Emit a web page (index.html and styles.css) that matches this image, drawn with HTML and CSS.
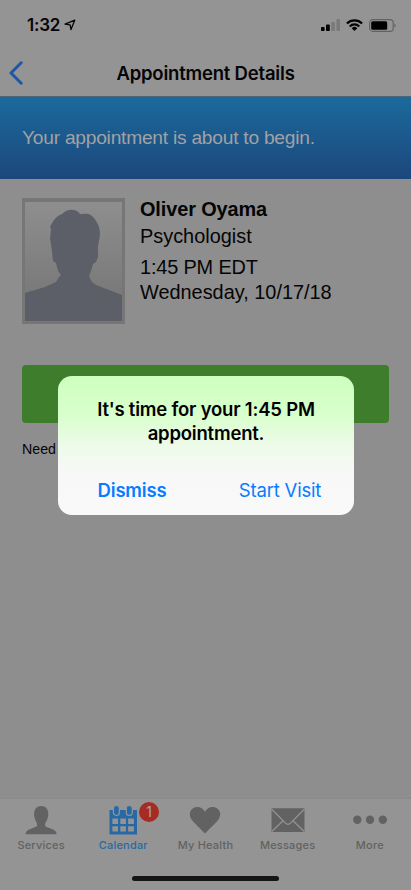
FILE: index.html
```html
<!DOCTYPE html>
<html lang="en">
<head>
<meta charset="utf-8">
<meta name="viewport" content="width=device-width, initial-scale=1">
<title>Appointment Details</title>
<link rel="stylesheet" href="styles.css">
</head>
<body>
<div class="screen">
  <header class="header">
    <div class="status">
      <div class="status-left">
        <span class="clock">1:32</span>
        <svg class="location" width="12" height="12" viewBox="0 0 12 12"><path d="M1 5.2 10.8 1.1 7 10.6 6.1 5.9Z" fill="none" stroke="#050505" stroke-width="1.3" stroke-linejoin="round"/></svg>
      </div>
      <div class="status-right">
        <svg width="19" height="12" viewBox="0 0 19 12"><rect x="0" y="8" width="3.6" height="4" rx=".8"/><rect x="5" y="5.6" width="3.8" height="6.4" rx=".8"/><rect x="10.3" y="3" width="3.6" height="9" rx=".8" fill="#7a7a7a"/><rect x="15.4" y="0" width="3.6" height="12" rx=".8" fill="#7a7a7a"/></svg>
        <svg width="17" height="12" viewBox="0 0 17 12"><g fill="none" stroke="#000" stroke-width="2.1"><path d="M.9 4.5a10.7 10.7 0 0 1 15.2 0"/><path d="M3.7 7.4a6.8 6.8 0 0 1 9.6 0"/></g><path d="M5.7 9.2a4 4 0 0 1 5.6 0L8.5 12Z"/></svg>
        <svg width="27" height="13" viewBox="0 0 27 13"><rect x=".6" y=".6" width="23.6" height="11.8" rx="3.2" fill="none" stroke="#626262" stroke-width="1.1"/><rect x="2.2" y="2.2" width="16" height="8.6" rx="1.6"/><path d="M25.4 4.4c1.6.6 1.6 3.6 0 4.2Z" fill="#626262"/></svg>
      </div>
    </div>
    <div class="nav">
      <svg class="back" width="14" height="24" viewBox="0 0 14 24"><path d="M12.2 1.8 2 12 12.2 22.2" fill="none" stroke="#1d57a6" stroke-width="3" stroke-linecap="round" stroke-linejoin="round"/></svg>
      <h1 class="title">Appointment Details</h1>
    </div>
  </header>
  <div class="banner"><span class="banner-text">Your appointment is about to begin.</span></div>
  <main class="content">
    <section class="provider">
      <div class="photo">
        <svg width="97" height="119" viewBox="0 0 97 119"><path fill="#5c5f67" d="M0 91 20 85 31 80 34 75 36 73 33 69 31 61 28 59 27 50 26 42 25 37 26 27 25 25C28 19 31 14 37 12 42 7 51 6 55 12L58 12C66 10 71 17 74 25 76 33 74 38 73 44L73 55 71 60 68 62 66 69 64 74 67 80 71 83 97 93V119H0Z"/></svg>
      </div>
      <div class="details">
        <div class="name">Oliver Oyama</div>
        <div class="role">Psychologist</div>
        <div class="time">1:45 PM EDT</div>
        <div class="date">Wednesday, 10/17/18</div>
      </div>
    </section>
    <div class="start"></div>
    <p class="help">Need</p>
  </main>
  <footer class="tabs">
    <div class="tab">
      <svg class="tab-icon" width="32" height="30" viewBox="0 0 32 30"><path d="M16.3 1C12 1 9.2 4 9.1 8.500c-.1 3.200.9 6.800 2.600 9.200.7 1 .7 3.300-.5 4L4 24.500C1.500 25.600.8 27 .6 29.300h31c-.2-2.300-1-3.700-3.500-4.800L21 21.700c-1.200-.7-1.200-3-.5-4 1.700-2.400 2.900-6 2.800-9.200C23.200 4 20.600 1 16.300 1Z"/></svg>
      <span class="tab-label">Services</span>
    </div>
    <div class="tab tab-active">
      <svg class="tab-icon" width="28" height="30" viewBox="0 0 28 30"><path fill-rule="evenodd" d="M.5 5H28V29.500H.5ZM3.400 13.500V19H9V13.500ZM11.300 13.500V19H16.900V13.500ZM19.100 13.500V19H24.900V13.500ZM3.400 21.300V26.600H9V21.300ZM11.300 21.300V26.600H16.900V21.300ZM19.100 21.300V26.600H24.900V21.300Z"/><g stroke="#949494" stroke-width="1.200"><rect x="4.400" y=".3" width="6" height="10.200" rx="3"/><rect x="17.300" y=".3" width="6" height="10.200" rx="3"/></g></svg>
      <span class="tab-label">Calendar</span>
      <span class="badge">1</span>
    </div>
    <div class="tab">
      <svg class="tab-icon" width="32" height="30" viewBox="0 0 32 30"><path d="M16 28.500C14 26.300 7 20 3.300 15.500-.2 11.200.2 6.500 3.200 3.900 7.300.4 13.500 1.700 16 6.700 18.500 1.700 24.700.4 28.800 3.900c3 2.600 3.400 7.300-.1 11.600C25 20 18 26.300 16 28.500Z"/></svg>
      <span class="tab-label">My Health</span>
    </div>
    <div class="tab">
      <svg class="tab-icon" width="34" height="30" viewBox="0 0 34 30"><path d="M.5 3.200h33V27H.5Z"/><path d="M.5 4 14.500 18.200Q17 20.700 19.500 18.200L33.500 4M.8 26.500 12 15.800M33.200 26.500 22 15.800" fill="none" stroke="#949494" stroke-width="1.200"/></svg>
      <span class="tab-label">Messages</span>
    </div>
    <div class="tab">
      <svg class="tab-icon" width="34" height="30" viewBox="0 0 34 30"><circle cx="4.300" cy="14.700" r="4.200"/><circle cx="17" cy="14.700" r="4.200"/><circle cx="29.800" cy="14.700" r="4.200"/></svg>
      <span class="tab-label">More</span>
    </div>
    <div class="home"></div>
  </footer>
  <div class="dialog" role="alertdialog">
    <p class="message">It's time for your 1:45 PM<br>appointment.</p>
    <div class="actions">
      <span class="action dismiss">Dismiss</span>
      <span class="action visit">Start Visit</span>
    </div>
  </div>
</div>
</body>
</html>
```
FILE: styles.css
```css
* { box-sizing: border-box; margin: 0; padding: 0; }
body { background: #8e8e8e; color: #050505; font-family: "Liberation Sans", Arial, sans-serif; }
svg { display: block; flex: none; }
.screen { position: relative; width: 411px; height: 890px; display: flex; flex-direction: column; overflow: hidden; }

.header { height: 96px; background: #949494; font-family: Inter, sans-serif; }
.status { height: 50px; display: flex; justify-content: space-between; padding: 0 15px 0 27px; }
.status-left { display: flex; padding-top: 15px; gap: 4px; }
.clock { font-size: 17px; line-height: 21px; font-weight: 600; letter-spacing: -.2px; }
.location { margin-top: 4px; }
.status-right { display: flex; align-items: flex-start; padding-top: 19px; gap: 6px; }
.nav { height: 46px; display: flex; align-items: center; padding-left: 9px; }
.title { flex: 1; margin-right: 23px; padding-bottom: 1px; text-align: center; font-size: 18.5px; line-height: 24px; font-weight: 600; letter-spacing: -.2px; white-space: nowrap; }

.banner { height: 83px; padding: 28px 22px 0; border-top: 1px solid #4a6878; background: linear-gradient(#1b6a9c, #1c477c); color: #a1a2a4; font-size: 19.2px; line-height: 26px; letter-spacing: -.24px; white-space: nowrap; }

.content { flex: 1; padding: 19px 22px 0; }
.provider { display: flex; gap: 15px; height: 126px; }
.photo { width: 103px; height: 126px; border: 3px solid #767676; border-top-width: 4px; background: linear-gradient(#8e8e8e, #767676 90%); }
.details { font-size: 19.9px; line-height: 26px; white-space: nowrap; }
.name { font-weight: 700; line-height: 24px; margin-top: -1px; letter-spacing: -.1px; }
.role { margin-top: 2px; }
.time { margin-top: 6px; line-height: 25px; letter-spacing: -.15px; }
.date { line-height: 25px; }
.start { height: 58px; margin-top: 41px; border-radius: 4px; background: #3e7d2b; }
.help { margin-top: 16px; font-size: 14.2px; line-height: 20px; }

.tabs { height: 92px; display: grid; grid-template-columns: repeat(5, 82.2px); grid-template-rows: 77px 5px; border-top: 1px solid #898989; background: #949494; color: #626262; fill: #626262; font-family: Inter, sans-serif; }
.tab { position: relative; display: flex; flex-direction: column; align-items: center; padding-top: 6px; }
.tab-label { margin-top: 3px; font-size: 11px; line-height: 14px; font-weight: 500; letter-spacing: .2px; white-space: nowrap; }
.tab-active { color: #2869a5; fill: #2869a5; }
.badge { position: absolute; left: 57px; top: 3px; width: 20px; height: 20px; border-radius: 50%; background: #a72b25; color: #a5a5a5; font-size: 14px; line-height: 20px; text-align: center; }
.home { grid-column: 1 / -1; justify-self: center; width: 147px; height: 5px; border-radius: 3px; background: #151515; }

.dialog { position: absolute; left: 58px; top: 376px; width: 296px; height: 139px; padding-top: 21px; border-radius: 14px; background: linear-gradient(#ceffbf 0%, #d8ffcc 28%, #edfae9 50%, #f8f8f8 70%, #f9f9f9); color: #000; font-family: Inter, sans-serif; text-align: center; }
.message { font-size: 18.5px; line-height: 24px; font-weight: 600; letter-spacing: -.2px; white-space: nowrap; }
.actions { display: grid; grid-template-columns: 1fr 1fr; margin-top: 33px; color: #087cff; font-size: 18.5px; line-height: 24px; letter-spacing: -.2px; }
.dismiss { font-weight: 600; }
```
